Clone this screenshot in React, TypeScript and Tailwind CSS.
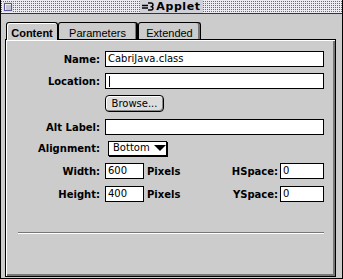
import React from "react";

function Field({ label, children, className = "" }: { label: string; children: React.ReactNode; className?: string }) {
  return (
    <div className={`flex items-center h-[16px] ${className}`}>
      <span className="w-[95px] text-right font-bold pr-[1px]">{label}</span>
      {children}
    </div>
  );
}

function Input({ value = "", width, cursor }: { value?: string; width?: string; cursor?: boolean }) {
  return (
    <div className={`h-[16px] bg-white border border-black flex items-center pl-[2px] leading-none ${width ?? "flex-1"}`}>
      {cursor ? <span className="w-px h-[11px] bg-black ml-px" /> : value}
    </div>
  );
}

export default function App() {
  return (
    <div className="w-[343px] h-[279px] bg-[#cccccc] border-l border-r border-b border-black flex flex-col overflow-hidden font-['DejaVu_Sans',sans-serif] text-[10px] text-black">
      {/* title bar */}
      <div className="h-[14px] border-b border-[#333] bg-[image:linear-gradient(to_bottom,#ececf2_1px,transparent_1px),linear-gradient(to_right,#6a6a78_1px,#ececf2_1px)] bg-[length:2px_2px] grid grid-cols-[1fr_auto_1fr] items-center">
        <div className="flex">
          <div className="ml-[2px] p-px bg-[#dcdce4]">
            <div className="w-[8px] h-[8px] border border-[#5a5a96] bg-[#c4c4d4] shadow-[inset_1px_1px_0_#eee]" />
          </div>
        </div>
        <div className="h-[13px] bg-[#d0d0d8] flex items-center px-[2px] gap-[2px]">
          <svg width="12" height="9" viewBox="0 0 12 9" fill="none" stroke="#000" strokeWidth="1.4">
            <path d="M0 3.5H6M0 6H6" />
            <path d="M6 1H9Q11 1 11 3Q11 4.6 8.5 4.6Q11 4.6 11 6.3Q11 8 9 8H6" />
          </svg>
          <span className="font-bold text-[11px] tracking-[0.6px] leading-none">Applet</span>
        </div>
        <div />
      </div>

      {/* body */}
      <div className="flex-1 pl-[4px] pr-[6px] pt-[8px] pb-[1px] flex flex-col">
        <div className="flex h-[17px] ml-px relative z-10 font-['Liberation_Sans',sans-serif] text-[11px]">
          <div className="w-[52px] h-[18px] border-l border-t border-r border-black rounded-t-[3px] bg-[#cccccc] shadow-[inset_1px_1px_0_#fff] flex justify-center pt-[2px] font-bold">
            Content
          </div>
          <div className="w-[80px] h-[17px] border border-b-0 border-black border-r-2 rounded-t-[3px] shadow-[inset_-1px_0_0_#777] flex justify-center pt-[2px]">
            Parameters
          </div>
          <div className="w-[63px] h-[17px] border border-b-0 border-black rounded-t-[3px] shadow-[inset_-2px_0_0_#777] flex justify-center pt-[2px]">
            Extended
          </div>
        </div>

        <div className="flex-1 border border-black shadow-[inset_1px_1px_0_#fff,inset_-2px_-2px_0_#777] pt-[11px] pr-[11px] flex flex-col">
          <Field label="Name:">
            <div className="ml-[4px] flex-1 flex"><Input value="CabriJava.class" /></div>
          </Field>
          <Field label="Location:" className="mt-[6px]">
            <div className="ml-[4px] flex-1 flex"><Input cursor /></div>
          </Field>
          <div className="mt-[6px] ml-[99px] w-[59px] h-[17px] rounded-[4px] border border-black bg-[#dddddd] shadow-[inset_-1px_-1px_0_#888,inset_1px_1px_0_#fff] flex items-center justify-center leading-none">
            Browse...
          </div>
          <Field label="Alt Label:" className="mt-[7px]">
            <div className="ml-[4px] flex-1 flex"><Input /></div>
          </Field>
          <Field label="Alignment:" className="mt-[5px]">
            <div className="ml-[7px] w-[59px] h-[15px] bg-white border border-black shadow-[1px_1px_0_#000] flex items-center pl-[4px] leading-none">
              Bottom
              <svg className="ml-[4px]" width="12" height="6" viewBox="0 0 12 6">
                <polygon points="0,0 12,0 6,6" fill="#000" />
              </svg>
            </div>
          </Field>
          <Field label="Width:" className="mt-[7px]">
            <div className="ml-[4px] flex-1 flex items-center">
              <Input value="600" width="w-[39px]" />
              <span className="ml-[3px] font-bold">Pixels</span>
              <span className="ml-auto font-bold">HSpace:</span>
              <div className="ml-[2px] flex"><Input value="0" width="w-[44px]" /></div>
            </div>
          </Field>
          <Field label="Height:" className="mt-[7px]">
            <div className="ml-[4px] flex-1 flex items-center">
              <Input value="400" width="w-[39px]" />
              <span className="ml-[3px] font-bold">Pixels</span>
              <span className="ml-auto font-bold">YSpace:</span>
              <div className="ml-[2px] flex"><Input value="0" width="w-[44px]" /></div>
            </div>
          </Field>
          <div className="mt-[30px] ml-[12px] w-[306px] h-[2px] border-t border-[#777] border-b border-b-white" />
        </div>
      </div>
    </div>
  );
}
